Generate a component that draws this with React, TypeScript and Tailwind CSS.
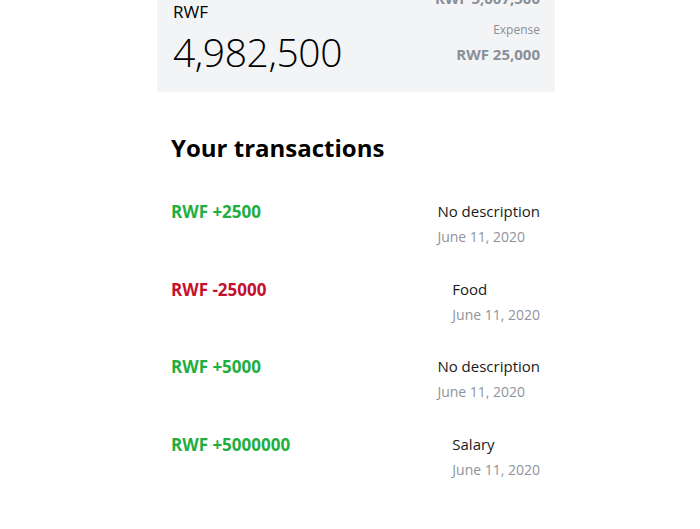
import React from 'react';

const transactions = [
  { amount: 'RWF +2500', positive: true, label: 'No description', date: 'June 11, 2020' },
  { amount: 'RWF -25000', positive: false, label: 'Food', date: 'June 11, 2020' },
  { amount: 'RWF +5000', positive: true, label: 'No description', date: 'June 11, 2020' },
  { amount: 'RWF +5000000', positive: true, label: 'Salary', date: 'June 11, 2020' },
];

export default function App() {
  return (
    <div className="h-[529px] overflow-hidden bg-white text-black" style={{ fontFamily: '"Open Sans", "DejaVu Sans", sans-serif' }}>
      <div className="ml-[157px] w-[398px]">
        {/* balance card, page is scrolled so its top is cut off */}
        <div className="-mt-[12px] flex justify-between bg-[#f3f4f6] pl-4 pr-[15px] pb-[18px]">
          <div className="flex flex-col pt-[13px]">
            <p className="text-[17px] leading-[22px]">RWF</p>
            <p className="mt-[7px] text-[39px] font-light leading-[44px] tracking-[-0.4px]">4,982,500</p>
          </div>
          <div className="flex flex-col items-end text-[#8a8f98]">
            <p className="text-[15px] font-bold leading-[20px]">RWF 5,007,500</p>
            <p className="mt-[13px] text-[12px] leading-[18px]">Expense</p>
            <p className="mt-[5px] text-[15px] font-bold leading-[20px]">RWF 25,000</p>
          </div>
        </div>

        <div className="pl-[14px] pr-[15px]">
          <h2 className="mt-[40px] text-[24px] font-bold leading-[32px]">Your transactions</h2>
          <ul className="mt-[36px] flex flex-col gap-[29.5px]">
            {transactions.map((t, i) => (
              <li key={i} className="flex justify-between">
                <p
                  className={
                    'pt-[1px] text-[17px] font-bold leading-[22px] ' +
                    (t.positive ? 'text-[#1fae40]' : 'text-[#c4102c]')
                  }
                >
                  {t.amount}
                </p>
                <div className="flex flex-col">
                  <p className="text-[15px] leading-[22px] text-[#1a1a1a]">{t.label}</p>
                  <p className="mt-[4px] text-[14px] leading-[22px] text-[#8f939b]">{t.date}</p>
                </div>
              </li>
            ))}
          </ul>
        </div>
      </div>
    </div>
  );
}
